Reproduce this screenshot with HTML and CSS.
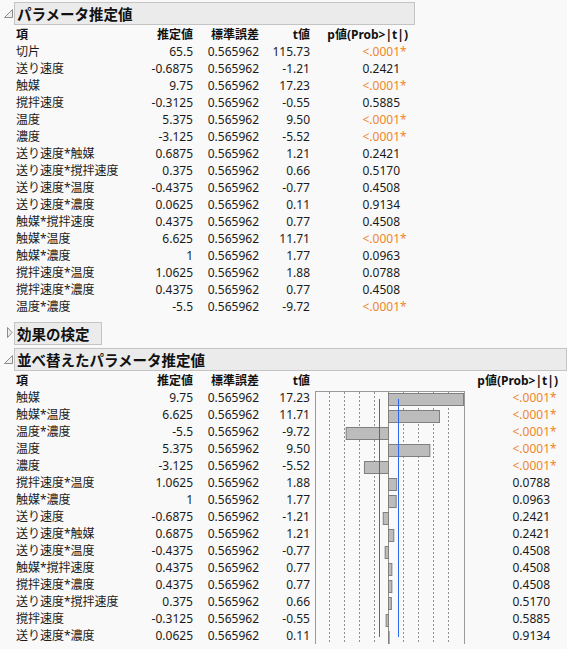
FILE: index.html
```html
<!DOCTYPE html>
<html lang="ja">
<head>
<meta charset="utf-8">
<title>パラメータ推定値</title>
<link rel="stylesheet" href="styles.css">
</head>
<body>
<section class="outline s1">
  <div class="outline-head">
    <svg class="disclose" width="14" height="23" viewBox="0 0 14 23"><polygon points="4.5,15.5 12.5,7.5 12.5,15.5" class="tri"/></svg>
    <div class="title t1">パラメータ推定値</div>
  </div>
  <div class="grid g1">
    <div class="h">項</div><div class="h n">推定値</div><div class="h n">標準誤差</div><div class="h n">t値</div><div class="h n">p値(Prob&gt;|t|)</div>
    <div>切片</div><div class="n">65.5</div><div class="n">0.565962</div><div class="n">115.73</div><div class="n sig">&lt;.0001<i class="star">*</i></div>
    <div>送り速度</div><div class="n">-0.6875</div><div class="n">0.565962</div><div class="n">-1.21</div><div class="n">0.2421<i class="star"></i></div>
    <div>触媒</div><div class="n">9.75</div><div class="n">0.565962</div><div class="n">17.23</div><div class="n sig">&lt;.0001<i class="star">*</i></div>
    <div>撹拌速度</div><div class="n">-0.3125</div><div class="n">0.565962</div><div class="n">-0.55</div><div class="n">0.5885<i class="star"></i></div>
    <div>温度</div><div class="n">5.375</div><div class="n">0.565962</div><div class="n">9.50</div><div class="n sig">&lt;.0001<i class="star">*</i></div>
    <div>濃度</div><div class="n">-3.125</div><div class="n">0.565962</div><div class="n">-5.52</div><div class="n sig">&lt;.0001<i class="star">*</i></div>
    <div>送り速度*触媒</div><div class="n">0.6875</div><div class="n">0.565962</div><div class="n">1.21</div><div class="n">0.2421<i class="star"></i></div>
    <div>送り速度*撹拌速度</div><div class="n">0.375</div><div class="n">0.565962</div><div class="n">0.66</div><div class="n">0.5170<i class="star"></i></div>
    <div>送り速度*温度</div><div class="n">-0.4375</div><div class="n">0.565962</div><div class="n">-0.77</div><div class="n">0.4508<i class="star"></i></div>
    <div>送り速度*濃度</div><div class="n">0.0625</div><div class="n">0.565962</div><div class="n">0.11</div><div class="n">0.9134<i class="star"></i></div>
    <div>触媒*撹拌速度</div><div class="n">0.4375</div><div class="n">0.565962</div><div class="n">0.77</div><div class="n">0.4508<i class="star"></i></div>
    <div>触媒*温度</div><div class="n">6.625</div><div class="n">0.565962</div><div class="n">11.71</div><div class="n sig">&lt;.0001<i class="star">*</i></div>
    <div>触媒*濃度</div><div class="n">1</div><div class="n">0.565962</div><div class="n">1.77</div><div class="n">0.0963<i class="star"></i></div>
    <div>撹拌速度*温度</div><div class="n">1.0625</div><div class="n">0.565962</div><div class="n">1.88</div><div class="n">0.0788<i class="star"></i></div>
    <div>撹拌速度*濃度</div><div class="n">0.4375</div><div class="n">0.565962</div><div class="n">0.77</div><div class="n">0.4508<i class="star"></i></div>
    <div>温度*濃度</div><div class="n">-5.5</div><div class="n">0.565962</div><div class="n">-9.72</div><div class="n sig">&lt;.0001<i class="star">*</i></div>
  </div>
</section>

<section class="outline s2">
  <div class="outline-head">
    <svg class="disclose" width="14" height="23" viewBox="0 0 14 23"><polygon points="7.5,5.5 12,10.5 7.5,15.5" class="tri"/></svg>
    <div class="title t2">効果の検定</div>
  </div>
</section>

<section class="outline s3">
  <div class="outline-head">
    <svg class="disclose" width="14" height="23" viewBox="0 0 14 23"><polygon points="4.5,15.5 12.5,7.5 12.5,15.5" class="tri"/></svg>
    <div class="title t3">並べ替えたパラメータ推定値</div>
  </div>
  <div class="grid g2">
    <div class="h">項</div><div class="h n">推定値</div><div class="h n">標準誤差</div><div class="h n">t値</div><div></div><div class="h n">p値(Prob&gt;|t|)</div>
    <svg class="chart" width="150" height="256" viewBox="0 0 150 256">
      <rect x="0.5" y="0.5" width="149" height="255" class="frame"/>
      <g class="grid-lines">
        <line x1="14.5" y1="1" x2="14.5" y2="255"/>
        <line x1="29.5" y1="1" x2="29.5" y2="255"/>
        <line x1="44.5" y1="1" x2="44.5" y2="255"/>
        <line x1="59.5" y1="1" x2="59.5" y2="255"/>
        <line x1="88.5" y1="1" x2="88.5" y2="255"/>
        <line x1="103.5" y1="1" x2="103.5" y2="255"/>
        <line x1="118.5" y1="1" x2="118.5" y2="255"/>
        <line x1="133.5" y1="1" x2="133.5" y2="255"/>
      </g>
      <line x1="73.5" y1="1" x2="73.5" y2="255" class="zero"/>
      <g class="bars">
        <rect x="73.5" y="2.5" width="75" height="12"/>
        <rect x="73.5" y="19.5" width="51" height="12"/>
        <rect x="31.2" y="36.5" width="42.3" height="12"/>
        <rect x="73.5" y="53.5" width="41.35" height="12"/>
        <rect x="49.47" y="70.5" width="24.03" height="12"/>
        <rect x="73.5" y="87.5" width="8.18" height="12"/>
        <rect x="73.5" y="104.5" width="7.7" height="12"/>
        <rect x="68.23" y="121.5" width="5.27" height="12"/>
        <rect x="73.5" y="138.5" width="5.27" height="12"/>
        <rect x="70.15" y="155.5" width="3.35" height="12"/>
        <rect x="73.5" y="172.5" width="3.35" height="12"/>
        <rect x="73.5" y="189.5" width="3.35" height="12"/>
        <rect x="73.5" y="206.5" width="2.87" height="12"/>
        <rect x="71.11" y="223.5" width="2.39" height="12"/>
        <rect x="73.5" y="240.5" width="0.6" height="12"/>
      </g>
      <line x1="64.5" y1="8" x2="64.5" y2="246" class="crit"/>
      <line x1="83.5" y1="8" x2="83.5" y2="246" class="crit"/>
    </svg>
    <div>触媒</div><div class="n">9.75</div><div class="n">0.565962</div><div class="n">17.23</div><div class="n sig c6">&lt;.0001<i class="star">*</i></div>
    <div>触媒*温度</div><div class="n">6.625</div><div class="n">0.565962</div><div class="n">11.71</div><div class="n sig c6">&lt;.0001<i class="star">*</i></div>
    <div>温度*濃度</div><div class="n">-5.5</div><div class="n">0.565962</div><div class="n">-9.72</div><div class="n sig c6">&lt;.0001<i class="star">*</i></div>
    <div>温度</div><div class="n">5.375</div><div class="n">0.565962</div><div class="n">9.50</div><div class="n sig c6">&lt;.0001<i class="star">*</i></div>
    <div>濃度</div><div class="n">-3.125</div><div class="n">0.565962</div><div class="n">-5.52</div><div class="n sig c6">&lt;.0001<i class="star">*</i></div>
    <div>撹拌速度*温度</div><div class="n">1.0625</div><div class="n">0.565962</div><div class="n">1.88</div><div class="n c6">0.0788<i class="star"></i></div>
    <div>触媒*濃度</div><div class="n">1</div><div class="n">0.565962</div><div class="n">1.77</div><div class="n c6">0.0963<i class="star"></i></div>
    <div>送り速度</div><div class="n">-0.6875</div><div class="n">0.565962</div><div class="n">-1.21</div><div class="n c6">0.2421<i class="star"></i></div>
    <div>送り速度*触媒</div><div class="n">0.6875</div><div class="n">0.565962</div><div class="n">1.21</div><div class="n c6">0.2421<i class="star"></i></div>
    <div>送り速度*温度</div><div class="n">-0.4375</div><div class="n">0.565962</div><div class="n">-0.77</div><div class="n c6">0.4508<i class="star"></i></div>
    <div>触媒*撹拌速度</div><div class="n">0.4375</div><div class="n">0.565962</div><div class="n">0.77</div><div class="n c6">0.4508<i class="star"></i></div>
    <div>撹拌速度*濃度</div><div class="n">0.4375</div><div class="n">0.565962</div><div class="n">0.77</div><div class="n c6">0.4508<i class="star"></i></div>
    <div>送り速度*撹拌速度</div><div class="n">0.375</div><div class="n">0.565962</div><div class="n">0.66</div><div class="n c6">0.5170<i class="star"></i></div>
    <div>撹拌速度</div><div class="n">-0.3125</div><div class="n">0.565962</div><div class="n">-0.55</div><div class="n c6">0.5885<i class="star"></i></div>
    <div>送り速度*濃度</div><div class="n">0.0625</div><div class="n">0.565962</div><div class="n">0.11</div><div class="n c6">0.9134<i class="star"></i></div>
  </div>
</section>
</body>
</html>
```

FILE: styles.css
```css
html, body {
  margin: 0;
  background: #f9f9f9;
}
body {
  padding-top: 2px;
  font-family: "Noto Sans", "Noto Sans CJK JP", sans-serif;
  font-size: 12px;
  color: #1b1b1b;
}
.outline-head {
  display: flex;
  height: 23px;
}
.disclose {
  flex: none;
  display: block;
}
.tri {
  fill: #efefef;
  stroke: #8c8c8c;
  stroke-width: 1;
}
.title {
  box-sizing: border-box;
  height: 23px;
  border: 1px solid #c4c4c4;
  background: #ebebeb;
  padding-left: 2px;
  font-family: "Noto Sans CJK JP", sans-serif;
  font-weight: bold;
  font-size: 14.5px;
  line-height: 21px;
  color: #111;
  white-space: nowrap;
}
.t1 { width: 401px; }
.t2 { width: 88px; }
.t3 { width: 553px; }
.s2 { margin-top: 7px; }
.s3 { margin-top: 3px; }

.grid {
  display: grid;
  margin-left: 16px;
  margin-top: 1px;
  grid-auto-rows: 17px;
  line-height: 17px;
  white-space: nowrap;
}
.g1 { grid-template-columns: 119px 58px 66px 51px 98px; }
.g2 { grid-template-columns: 119px 58px 66px 51px 155px 93px; }
.g2 .c6 { grid-column: 6; }
.n { text-align: right; }
.h { font-weight: bold; color: #111; }
.sig { color: #f0862b; }
.star {
  display: inline-block;
  width: 8px;
  font-style: normal;
  text-align: left;
}
.chart {
  grid-column: 5;
  grid-row: 2 / span 15;
  margin-top: 2px;
  margin-left: 5px;
  display: block;
}
.frame {
  fill: #f9f9f9;
  stroke: #9a9a9a;
  stroke-width: 1;
}
.grid-lines line {
  stroke: #8f8f8f;
  stroke-width: 1;
  stroke-dasharray: 2 2;
}
.zero {
  stroke: #8f8f8f;
  stroke-width: 1;
}
.bars rect {
  fill: #bcbcbc;
  stroke: #7f7f7f;
  stroke-width: 1;
}
.crit {
  stroke: #2a6af2;
  stroke-width: 1;
}
```
